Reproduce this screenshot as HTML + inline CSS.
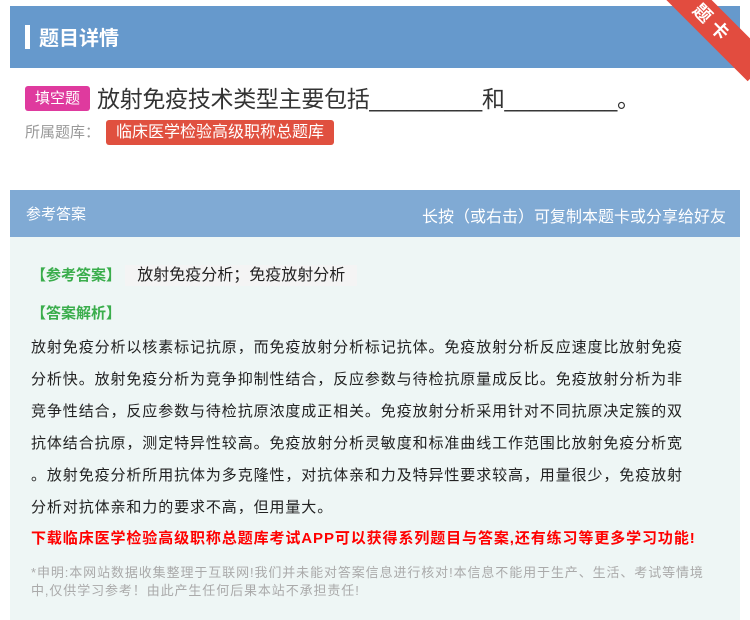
<!DOCTYPE html>
<html><head><meta charset="utf-8"><style>
*{margin:0;padding:0;box-sizing:border-box}
body{width:750px;height:620px;background:#fff;font-family:"Liberation Sans","Noto Sans CJK SC",sans-serif;position:relative;overflow:hidden}
.hd{position:absolute;left:10px;top:6px;width:730px;height:62px;background:#6699cc;color:#fff;font-size:20px;font-weight:bold}
.hd .bar{position:absolute;left:15px;top:19px;width:5px;height:24px;background:#fff}
.hd span{position:absolute;left:29px;top:16px}
.rib{position:absolute;right:-28px;top:8px;width:130px;height:32px;background:#e24c3f;transform:rotate(45deg);color:#fff;font-size:18px;text-align:center;line-height:32px;font-weight:bold;letter-spacing:6px}
.q{position:absolute;left:25px;top:80px;font-size:23px;color:#333;white-space:nowrap;letter-spacing:-0.3px}
.tag{display:inline-block;background:#df3a9e;color:#fff;font-size:15px;padding:0 10px;height:25px;line-height:25px;border-radius:3px;vertical-align:4px;margin-right:7px;letter-spacing:0}
.lib{position:absolute;left:25px;top:120px;font-size:15px;color:#999;white-space:nowrap}
.lib b{font-weight:normal;display:inline-block;background:#e0503f;color:#fff;padding:0 10px;height:25px;line-height:25px;border-radius:3px;font-size:16px;margin-left:6px}
.ah{position:absolute;left:10px;top:190px;width:730px;height:47px;background:#80aad4;color:#fff;font-size:15px}
.ah .l{position:absolute;left:16px;top:13px}.ah .r{position:absolute;right:14px;top:13px;font-size:16px}
.bd{position:absolute;left:10px;top:237px;width:730px;height:383px;background:#eef6f5}
.t{position:absolute;left:31px;font-size:15px;color:#222;white-space:nowrap}
.g{color:#3aad4c;font-weight:bold;font-size:15px}
.red{position:absolute;left:31px;top:527px;font-size:15px;color:#f00;font-weight:bold;letter-spacing:0.9px;white-space:nowrap}
.note{position:absolute;left:31px;top:564px;font-size:13px;color:#aaa;line-height:18px;white-space:nowrap;letter-spacing:0.9px}
</style></head><body>
<div class="hd"><div class="bar"></div><span>题目详情</span></div>
<div class="rib">题卡</div>
<div class="q"><span class="tag">填空题</span>放射免疫技术类型主要包括_________和_________。</div>
<div class="lib">所属题库：<b>临床医学检验高级职称总题库</b></div>
<div class="ah"><span class="l">参考答案</span><span class="r">长按（或右击）可复制本题卡或分享给好友</span></div>
<div class="bd"></div>
<div class="t" style="top:261px"><span class="g">【参考答案】</span> <span style="background:#f4f4f4;padding:2px 12px;font-size:16px">放射免疫分析；免疫放射分析</span></div>
<div class="t g" style="top:302px">【答案解析】</div>
<div class="t" style="top:332px;line-height:32px;letter-spacing:0.9px">放射免疫分析以核素标记抗原，而免疫放射分析标记抗体。免疫放射分析反应速度比放射免疫<br>分析快。放射免疫分析为竞争抑制性结合，反应参数与待检抗原量成反比。免疫放射分析为非<br>竞争性结合，反应参数与待检抗原浓度成正相关。免疫放射分析采用针对不同抗原决定簇的双<br>抗体结合抗原，测定特异性较高。免疫放射分析灵敏度和标准曲线工作范围比放射免疫分析宽<br>。放射免疫分析所用抗体为多克隆性，对抗体亲和力及特异性要求较高，用量很少，免疫放射<br>分析对抗体亲和力的要求不高，但用量大。</div>
<div class="red">下载临床医学检验高级职称总题库考试APP可以获得系列题目与答案,还有练习等更多学习功能!</div>
<div class="note">*申明:本网站数据收集整理于互联网!我们并未能对答案信息进行核对!本信息不能用于生产、生活、考试等情境<br>中,仅供学习参考！由此产生任何后果本站不承担责任!</div>
</body></html>
